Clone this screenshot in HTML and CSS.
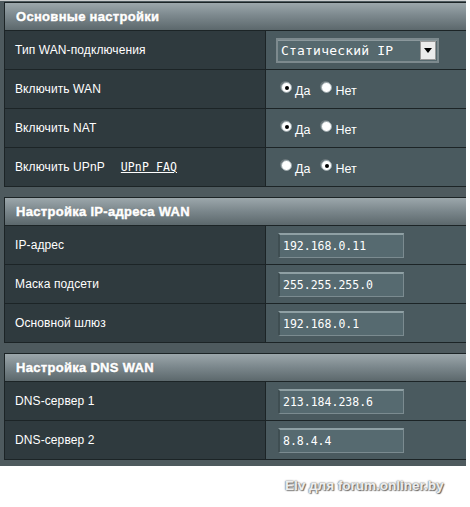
FILE: index.html
```html
<!DOCTYPE html>
<html lang="ru">
<head>
<meta charset="utf-8">
<title>WAN</title>
<link rel="stylesheet" href="styles.css">
</head>
<body>
<div class="page">
  <section class="panel">
    <div class="head">Основные настройки</div>
    <div class="row">
      <div class="lbl">Тип WAN-подключения</div>
      <div class="val">
        <div class="select"><span class="sel-text">Статический IP</span><span class="sel-btn"><svg width="8" height="5" viewBox="0 0 8 5"><path d="M0 0h8L4 5z" fill="#000"/></svg></span></div>
      </div>
    </div>
    <div class="row">
      <div class="lbl">Включить WAN</div>
      <div class="val radios"><span class="radio on"></span><span class="rt">Да</span><span class="radio"></span><span class="rt">Нет</span></div>
    </div>
    <div class="row">
      <div class="lbl">Включить NAT</div>
      <div class="val radios"><span class="radio on"></span><span class="rt">Да</span><span class="radio"></span><span class="rt">Нет</span></div>
    </div>
    <div class="row">
      <div class="lbl">Включить UPnP <a class="faq" href="#">UPnP FAQ</a></div>
      <div class="val radios"><span class="radio"></span><span class="rt">Да</span><span class="radio on"></span><span class="rt">Нет</span></div>
    </div>
  </section>

  <section class="panel">
    <div class="head">Настройка IP-адреса WAN</div>
    <div class="row">
      <div class="lbl">IP-адрес</div>
      <div class="val"><div class="input">192.168.0.11</div></div>
    </div>
    <div class="row">
      <div class="lbl">Маска подсети</div>
      <div class="val"><div class="input">255.255.255.0</div></div>
    </div>
    <div class="row">
      <div class="lbl">Основной шлюз</div>
      <div class="val"><div class="input">192.168.0.1</div></div>
    </div>
  </section>

  <section class="panel">
    <div class="head">Настройка DNS WAN</div>
    <div class="row">
      <div class="lbl">DNS-сервер 1</div>
      <div class="val"><div class="input">213.184.238.6</div></div>
    </div>
    <div class="row">
      <div class="lbl">DNS-сервер 2</div>
      <div class="val"><div class="input">8.8.4.4</div></div>
    </div>
  </section>
</div>
<div class="mark">Elv для forum.onliner.by</div>
</body>
</html>
```

FILE: styles.css
```css
html, body {
  margin: 0;
  padding: 0;
  background: #ffffff;
}
body {
  width: 470px;
  height: 507px;
  overflow: hidden;
  font-family: "Liberation Sans", Arial, sans-serif;
  font-size: 12px;
  color: #ffffff;
}
.page {
  width: 462px;
  background: #4e5a5e;
  border-top: 1px solid #c9cccd;
  padding: 1px 0 6px 4px;
  display: flex;
  flex-direction: column;
  gap: 10px;
}
.panel {
  border: 1px solid #1c2426;
  border-right: none;
  background: #2f3a3e;
}
.head {
  height: 27px;
  display: flex;
  align-items: center;
  padding-left: 11px;
  background: linear-gradient(#9ca7ab, #7d898e 45%, #5c686c);
  font-family: "Liberation Sans", Arial, sans-serif;
  font-weight: bold;
  font-size: 13px;
  letter-spacing: 0.3px;
  -webkit-text-stroke: 0.5px #ffffff;
  color: #ffffff;
  text-shadow: 0 0 1px #444;
}
.row {
  display: flex;
  height: 38px;
  border-top: 1px solid #1c2426;
}
.lbl {
  width: 250px;
  padding-left: 10px;
  display: flex;
  align-items: center;
  background: #2f3a3e;
  border-right: 1px solid #1c2426;
  letter-spacing: 0.1px;
}
.val {
  flex: 1;
  background: #4a5a5f;
  display: flex;
  align-items: center;
  padding-left: 10px;
}
.faq {
  margin-left: 16px;
  color: #ffffff;
  font-family: "DejaVu Sans Mono", "Liberation Mono", monospace;
  font-size: 11.5px;
  text-decoration: underline;
}
.select {
  width: 159px;
  height: 21px;
  border: 2px solid #7d8a8e;
  background: #56696e;
  display: flex;
  align-items: center;
  justify-content: space-between;
  box-shadow: inset 0 1px 0 #8b989c;
}
.sel-text {
  padding-left: 3px;
  font-family: "DejaVu Sans Mono", "Liberation Mono", monospace;
  font-size: 13px;
  letter-spacing: 0.2px;
}
.sel-btn {
  width: 16px;
  height: 19px;
  margin-right: 1px;
  background: #ececec;
  border: 1px solid #9a9a9a;
  box-sizing: border-box;
  display: flex;
  align-items: center;
  justify-content: center;
}
.radios {
  padding-left: 15px;
}
.radio {
  width: 11px;
  height: 11px;
  box-sizing: border-box;
  border-radius: 50%;
  background: #ffffff;
  border: 1px solid #9aa6aa;
  box-shadow: -1px -1px 0 #6c787c;
  display: flex;
  align-items: center;
  justify-content: center;
  margin-top: -3px;
}
.radio.on::after {
  content: "";
  width: 4px;
  height: 4px;
  border-radius: 50%;
  background: #000;
}
.rt {
  margin-left: 3px;
  margin-right: 11px;
  font-size: 12.5px;
  margin-top: 3px;
}
.input {
  margin-left: 2px;
  width: 120px;
  height: 22px;
  background: #566a70;
  border: 1px solid #7b8b90;
  border-top: 2px solid #8fa0a4;
  border-left: 2px solid #3f4e52;
  display: flex;
  align-items: center;
  padding-left: 3px;
  font-family: "DejaVu Sans Mono", "Liberation Mono", monospace;
  font-size: 11.5px;
}
.mark {
  margin: 12px 0 0 285px;
  font-family: "Liberation Sans", Arial, sans-serif;
  font-weight: bold;
  font-size: 13.5px;
  color: #eeeeee;
  -webkit-text-stroke: 0.3px #eeeeee;
  text-shadow: 0 0 2px #555, 0 0 1px #333, 1px 1px 1px #666;
}
```
